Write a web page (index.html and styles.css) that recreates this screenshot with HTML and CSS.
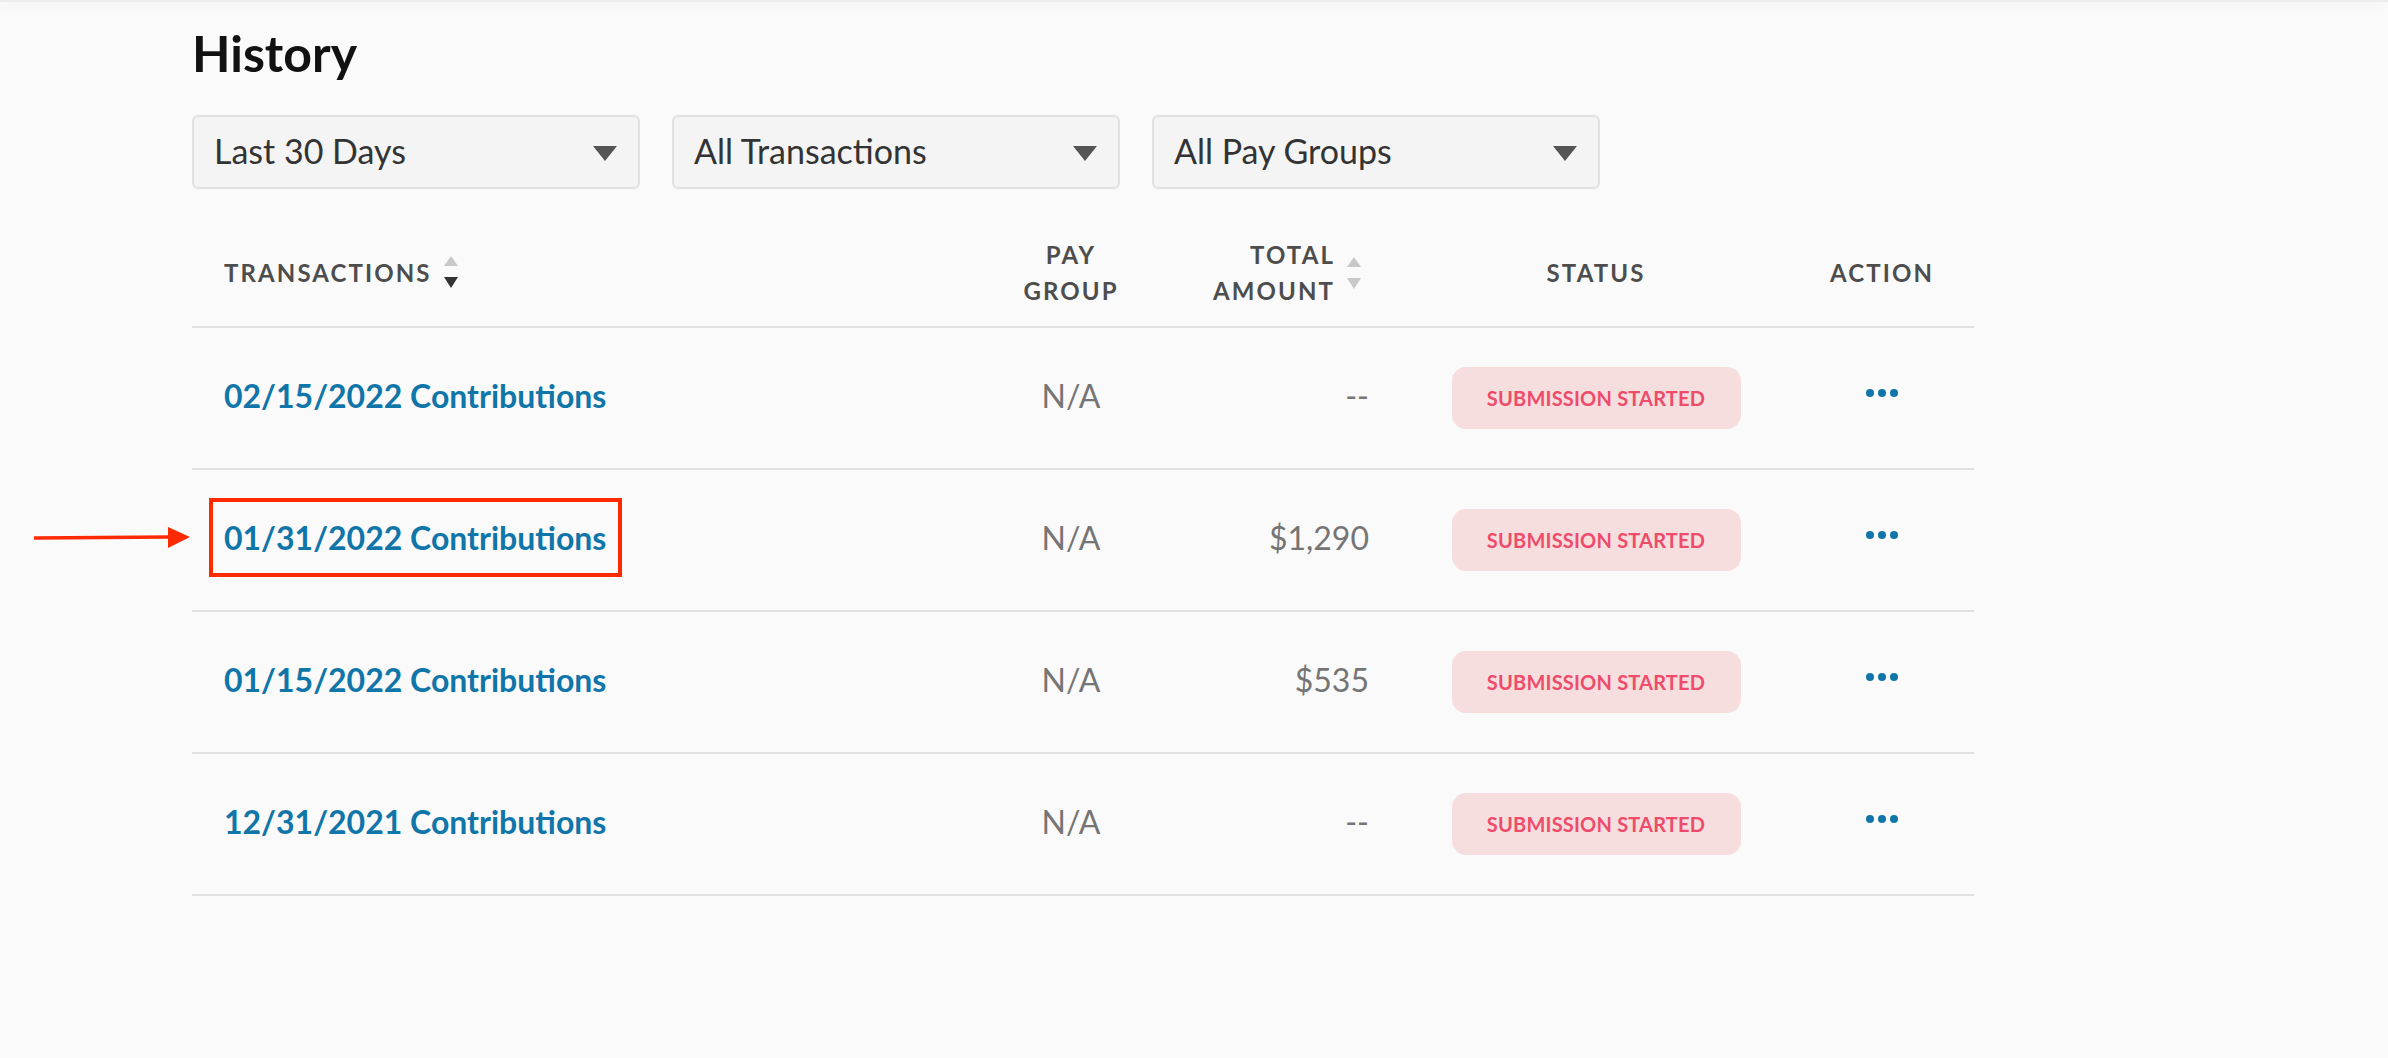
FILE: index.html
```html
<!DOCTYPE html>
<html lang="en">
<head>
<meta charset="utf-8">
<title>History</title>
<link rel="stylesheet" href="styles.css">
</head>
<body>
<div class="topbar"></div>
<main class="page">
  <h1 class="title">History</h1>
  <div class="filters">
    <div class="select"><span>Last 30 Days</span><span class="caret"></span></div>
    <div class="select"><span>All Transactions</span><span class="caret"></span></div>
    <div class="select"><span>All Pay Groups</span><span class="caret"></span></div>
  </div>

  <div class="table">
    <div class="row head">
      <div class="cell c1"><span>TRANSACTIONS</span>
        <svg class="sort" width="14" height="32" viewBox="0 0 14 32"><polygon points="7,0 14,10 0,10" fill="#c8c8c8"/><polygon points="0,21 14,21 7,32" fill="#333"/></svg>
      </div>
      <div class="cell c2 two"><span>PAY<br>GROUP</span></div>
      <div class="cell c3 two right"><span>TOTAL<br>AMOUNT</span>
        <svg class="sort" width="14" height="32" viewBox="0 0 14 32"><polygon points="7,0 14,10 0,10" fill="#c8c8c8"/><polygon points="0,21 14,21 7,32" fill="#c8c8c8"/></svg>
      </div>
      <div class="cell c4"><span>STATUS</span></div>
      <div class="cell c5"><span>ACTION</span></div>
      <div class="cell c6"></div>
    </div>

    <div class="row">
      <div class="cell c1"><a class="link">02/15/2022 Contributions</a></div>
      <div class="cell c2 muted">N/A</div>
      <div class="cell c3 muted right">--</div>
      <div class="cell c4"><span class="badge">SUBMISSION STARTED</span></div>
      <div class="cell c5"><span class="dots"><i></i><i></i><i></i></span></div>
      <div class="cell c6"></div>
    </div>

    <div class="row">
      <div class="cell c1"><a class="link">01/31/2022 Contributions</a></div>
      <div class="cell c2 muted">N/A</div>
      <div class="cell c3 muted right">$1,290</div>
      <div class="cell c4"><span class="badge">SUBMISSION STARTED</span></div>
      <div class="cell c5"><span class="dots"><i></i><i></i><i></i></span></div>
      <div class="cell c6"></div>
    </div>

    <div class="row">
      <div class="cell c1"><a class="link">01/15/2022 Contributions</a></div>
      <div class="cell c2 muted">N/A</div>
      <div class="cell c3 muted right">$535</div>
      <div class="cell c4"><span class="badge">SUBMISSION STARTED</span></div>
      <div class="cell c5"><span class="dots"><i></i><i></i><i></i></span></div>
      <div class="cell c6"></div>
    </div>

    <div class="row">
      <div class="cell c1"><a class="link">12/31/2021 Contributions</a></div>
      <div class="cell c2 muted">N/A</div>
      <div class="cell c3 muted right">--</div>
      <div class="cell c4"><span class="badge">SUBMISSION STARTED</span></div>
      <div class="cell c5"><span class="dots"><i></i><i></i><i></i></span></div>
      <div class="cell c6"></div>
    </div>
  </div>
</main>

<div class="annot-box"></div>
<svg class="annot-arrow" width="156" height="22" viewBox="0 0 156 22"><line x1="0" y1="11" x2="136" y2="10" stroke="#ff2a00" stroke-width="3.5"/><polygon points="134,0 156,10 134,21" fill="#ff2a00"/></svg>
</body>
</html>
```

FILE: styles.css
```css
html, body {
  margin: 0;
  padding: 0;
  background: #fafafa;
}
body {
  font-family: Lato, "Noto Sans", "Liberation Sans", sans-serif;
  color: #333;
  width: 2388px;
  height: 1058px;
  overflow: hidden;
  position: relative;
}
.topbar {
  height: 2px;
  background: #ececec;
  box-shadow: 0 2px 12px rgba(0, 0, 0, 0.09);
}
.page {
  padding-left: 192px;
}
.title {
  margin: 21px 0 0 0;
  font-size: 50px;
  line-height: 60px;
  font-weight: 700;
  color: #111;
}
.filters {
  display: flex;
  gap: 32px;
  margin-top: 32px;
}
.select {
  box-sizing: border-box;
  width: 448px;
  height: 74px;
  border: 2px solid #e1e1e1;
  border-radius: 6px;
  background: #f4f4f4;
  display: flex;
  align-items: center;
  justify-content: space-between;
  padding: 0 21px 4px 20px;
  font-size: 34px;
  color: #333;
}
.caret {
  width: 0;
  height: 0;
  border-left: 12px solid transparent;
  border-right: 12px solid transparent;
  border-top: 15px solid #555;
  margin-top: 6px;
}
.table {
  width: 1782px;
  margin-top: 31px;
}
.row {
  display: grid;
  grid-template-columns: 768px 222px 187px 454px 118px 33px;
  height: 140px;
  border-bottom: 2px solid #e0e0e0;
  align-items: center;
}
.row.head {
  height: 106px;
  font-size: 24px;
  font-weight: 700;
  letter-spacing: 2.1px;
  color: #4d4d4d;
  line-height: 36px;
}
.cell {
  display: flex;
  align-items: center;
  justify-content: center;
}
.c1 {
  justify-content: flex-start;
  padding-left: 32px;
}
.right {
  justify-content: flex-end;
}
.two {
  text-align: center;
}
.c3.two {
  text-align: right;
}
.row.head .c3 {
  padding-right: 8px;
}
.sort {
  margin-left: 12px;
  display: block;
}
.c1 .sort {
  margin-top: -2px;
}
.link {
  color: #1075a8;
  font-size: 32px;
  font-weight: 700;
  text-decoration: none;
  margin-top: -5px;
}
.muted {
  color: #757575;
  font-size: 32px;
  padding-bottom: 5px;
}
.badge {
  box-sizing: border-box;
  width: 289px;
  height: 62px;
  border-radius: 14px;
  background: #f6dede;
  color: #ef4b6a;
  font-size: 20px;
  font-weight: 700;
  letter-spacing: 0.2px;
  display: flex;
  align-items: center;
  justify-content: center;
}
.dots {
  display: flex;
  gap: 4px;
  margin-top: -10px;
}
.dots i {
  width: 8px;
  height: 8px;
  border-radius: 50%;
  background: #1075a8;
  display: block;
}
.annot-box {
  position: absolute;
  left: 209px;
  top: 498px;
  width: 405px;
  height: 71px;
  border: 4px solid #ff2a00;
}
.annot-arrow {
  position: absolute;
  left: 34px;
  top: 527px;
}
```
